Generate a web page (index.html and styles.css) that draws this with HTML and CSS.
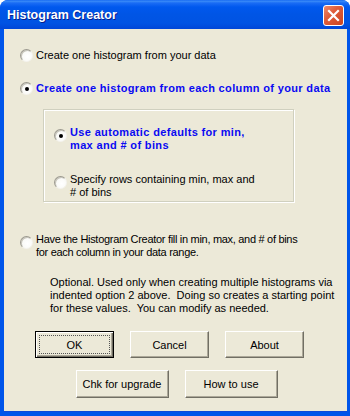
FILE: index.html
```html
<!DOCTYPE html>
<html>
<head>
<meta charset="utf-8">
<link rel="stylesheet" href="styles.css">
</head>
<body>
<div class="window">
  <div class="titlebar">
    <span class="title">Histogram Creator</span>
    <span class="close">
      <svg width="13" height="13" viewBox="0 0 13 13"><path d="M2 2 L11 11 M11 2 L2 11" stroke="#fff" stroke-width="2.2" stroke-linecap="square"/></svg>
    </span>
  </div>
  <div class="client">
    <div class="opt opt1"><span class="radio"></span><span class="label">Create one histogram from your data</span></div>
    <div class="opt opt2"><span class="radio checked"></span><span class="label bold">Create one histogram from each column of your data</span></div>
    <div class="group">
      <div class="gopt gopt1"><span class="radio checked"></span><span class="label bold">Use automatic defaults for min,<br>max and # of bins</span></div>
      <div class="gopt gopt2"><span class="radio"></span><span class="label">Specify rows containing min, max and<br># of bins</span></div>
    </div>
    <div class="gopt opt3"><span class="radio"></span><span class="label narrow">Have the Histogram Creator fill in min, max, and # of bins<br>for each column in your data range.</span></div>
    <p class="note">Optional. Used only when creating multiple histograms via<br>indented option 2 above.&nbsp; Doing so creates a starting point<br>for these values.&nbsp; You can modify as needed.</p>
    <div class="btnrow row1">
      <button class="btn default"><span class="focus">OK</span></button>
      <button class="btn">Cancel</button>
      <button class="btn">About</button>
    </div>
    <div class="btnrow row2">
      <button class="btn wide">Chk for upgrade</button>
      <button class="btn wide">How to use</button>
    </div>
  </div>
</div>
</body>
</html>
```
FILE: styles.css
```css
html, body {
  margin: 0;
  padding: 0;
  background: #ffffff;
}
.window {
  width: 350px;
  height: 416px;
  box-sizing: border-box;
  display: flex;
  flex-direction: column;
  background: #0055ea;
  border-radius: 8px 8px 0 0;
  overflow: hidden;
  font-family: "Liberation Sans", Arial, sans-serif;
  font-size: 11px;
  color: #000;
}
.titlebar {
  height: 29px;
  flex: none;
  display: flex;
  align-items: center;
  justify-content: space-between;
  padding: 0 6px 0 7px;
  background: linear-gradient(#0a5ef0 0, #3d8df8 1px, #1a6cf5 3px, #0058ee 7px, #0055e5 50%, #0053e3 80%, #0046d8 100%);
}
.title {
  color: #fff;
  font-weight: bold;
  font-size: 12.5px;
  text-shadow: 1px 1px 0 #0a1f8c;
  margin-top: 1px;
}
.close {
  width: 19px;
  height: 19px;
  border: 1px solid #fff;
  border-radius: 3px;
  background: linear-gradient(135deg, #ee8a6c 0%, #df5d3b 40%, #cc4420 100%);
  display: flex;
  align-items: center;
  justify-content: center;
  margin-top: 1px;
}
.close svg { display: block; }
.client {
  flex: 1;
  margin: 0 3px 5px 4px;
  background: #ece9d8;
  padding-top: 19px;
  box-shadow: 0 1px 0 #0f4ad8;
}
.radio {
  flex: none;
  width: 11px;
  height: 11px;
  border-radius: 50%;
  border: 1px solid;
  border-color: #9c9a90 #f4f3ee #f4f3ee #9c9a90;
  background: radial-gradient(circle at 60% 60%, #ffffff 0%, #fafaf7 55%, #dedcd2 100%);
  box-shadow: inset 1px 1px 0 #c8c6bc;
  position: relative;
}
.radio.checked::after {
  content: "";
  position: absolute;
  left: 4px;
  top: 4px;
  width: 4px;
  height: 4px;
  border-radius: 50%;
  background: #000;
}
.label {
  line-height: 13px;
}
.narrow {
  letter-spacing: -0.3px;
}
.bold {
  font-weight: bold;
  color: #0a0af2;
  letter-spacing: 0.35px;
}
.opt {
  display: flex;
  align-items: center;
  gap: 3px;
  margin-left: 16px;
  height: 14px;
}
.opt2 { margin-top: 19px; }
.group {
  margin: 14px 0 0 39px;
  width: 251px;
  height: 93px;
  border: 1px solid #d0d0bf;
  box-shadow: 1px 1px 0 #fff, inset 1px 1px 0 #fff;
  padding-top: 16px;
  box-sizing: border-box;
}
.gopt {
  display: flex;
  align-items: flex-start;
  gap: 3px;
}
.gopt .radio { margin-top: 3px; }
.gopt1, .gopt2 { margin-left: 10px; }
.gopt2 { margin-top: 21px; }
.opt3 { margin: 31px 0 0 16px; }
.note {
  margin: 17px 0 0 46px;
  line-height: 13px;
}
.btnrow {
  display: flex;
  gap: 16px;
}
.row1 { margin: 16px 0 0 31px; }
.row2 { margin-top: 12px; justify-content: center; padding-left: 2px; }
.btn {
  width: 79px;
  height: 27px;
  box-sizing: border-box;
  font-family: "Liberation Sans", Arial, sans-serif;
  font-size: 11px;
  color: #000;
  background: #ece9d8;
  border: 1px solid;
  border-color: #ffffff #716f64 #716f64 #ffffff;
  box-shadow: inset -1px -1px 0 #aca899;
  padding: 0;
  margin: 0;
  display: flex;
  align-items: center;
  justify-content: center;
}
.btn.wide { width: 93px; height: 28px; }
.btn.default {
  border: 1px solid #000;
  box-shadow: inset 1px 1px 0 #fff, inset -1px -1px 0 #716f64, inset -2px -2px 0 #aca899;
}
.focus {
  display: flex;
  align-items: center;
  justify-content: center;
  width: 69px;
  height: 17px;
  border: 1px dotted #555;
}
```
